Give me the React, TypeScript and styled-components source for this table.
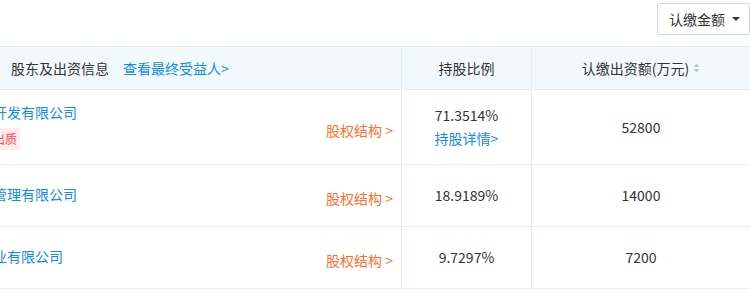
import React from 'react';
import styled, { createGlobalStyle } from 'styled-components';

const GlobalStyle = createGlobalStyle`
  html, body { margin: 0; padding: 0; background: #fff; }
  body {
    font-family: "Noto Sans CJK SC", "Noto Sans", sans-serif;
    font-size: 14px;
    color: #333;
  }
`;

const BLUE = '#128bed';
const ORANGE = '#ff6f2c';
const LINE = '#e4eef6';

const Page = styled.div`
  width: 750px;
  height: 294px;
  overflow: hidden;
  background: #fff;
`;

const TopBar = styled.div`
  height: 46px;
  box-sizing: border-box;
  padding-top: 3px;
  display: flex;
  justify-content: flex-end;
  align-items: flex-start;
`;

const DropButton = styled.button`
  height: 32px;
  width: 93px;
  box-sizing: border-box;
  border: 1px solid #d9d9d9;
  border-radius: 2px;
  background: #fff;
  display: flex;
  align-items: center;
  gap: 7px;
  padding: 0 0 0 11px;
  font-family: inherit;
  font-size: 14px;
  color: #333;
  line-height: 20px;
`;

const Caret = styled.span`
  width: 0;
  height: 0;
  border-left: 4px solid transparent;
  border-right: 4px solid transparent;
  border-top: 4px solid #333;
`;

const Table = styled.div`
  border-top: 1px solid ${LINE};
`;

const Row = styled.div<{ $h: number; $head?: boolean }>`
  display: grid;
  grid-template-columns: 402px 130px 1fr;
  height: ${(p) => p.$h}px;
  border-bottom: 1px solid ${LINE};
  background: ${(p) => (p.$head ? '#f2f9fc' : '#fff')};
`;

const Cell = styled.div<{ $divider?: boolean }>`
  display: flex;
  flex-direction: column;
  align-items: center;
  justify-content: center;
  border-right: ${(p) => (p.$divider ? `1px solid ${LINE}` : 'none')};
  line-height: 23px;
  color: #333;
`;

const HeadLeft = styled.div`
  display: flex;
  align-items: center;
  gap: 14px;
  padding-left: 11px;
  border-right: 1px solid ${LINE};
  line-height: 20px;
`;

const HeadCenter = styled.div<{ $divider?: boolean }>`
  display: flex;
  align-items: center;
  justify-content: center;
  gap: 4px;
  line-height: 20px;
  border-right: ${(p) => (p.$divider ? `1px solid ${LINE}` : 'none')};
`;

const Link = styled.span`
  color: ${BLUE};
`;

const NameCell = styled.div`
  display: flex;
  align-items: center;
  justify-content: space-between;
  padding-right: 8px;
  border-right: 1px solid ${LINE};
  overflow: hidden;
`;

const NameBlock = styled.div`
  display: flex;
  flex-direction: column;
  align-items: flex-start;
  gap: 5px;
  margin-left: -7px;
  padding-bottom: 4px;
`;

const Name = styled.span`
  color: ${BLUE};
  line-height: 22px;
  white-space: nowrap;
`;

const Tag = styled.span`
  font-size: 12px;
  line-height: 22px;
  padding: 0 3px;
  margin-left: -3px;
  border-radius: 2px;
  color: #fd485e;
  background: #ffecef;
`;

const StructLink = styled.span`
  color: ${ORANGE};
  line-height: 22px;
  padding-top: 5px;
  white-space: pre;
`;

const SortIcon = () => (
  <svg width="7" height="10" viewBox="0 0 7 10">
    <path d="M3.5 0.5 L6.5 4 L0.5 4 Z" fill="#c0c4cc" />
    <path d="M3.5 9.5 L6.5 6 L0.5 6 Z" fill="#c0c4cc" />
  </svg>
);

type Holder = {
  name: string;
  tag?: string;
  pct: string;
  detail?: boolean;
  amount: string;
  h: number;
};

const holders: Holder[] = [
  { name: '开发有限公司', tag: '出质', pct: '71.3514%', detail: true, amount: '52800', h: 74 },
  { name: '管理有限公司', pct: '18.9189%', amount: '14000', h: 61 },
  { name: '业有限公司', pct: '9.7297%', amount: '7200', h: 61 },
];

export default function App() {
  return (
    <Page>
      <GlobalStyle />
      <TopBar>
        <DropButton>
          认缴金额
          <Caret />
        </DropButton>
      </TopBar>
      <Table>
        <Row $h={42} $head>
          <HeadLeft>
            <span>股东及出资信息</span>
            <Link>查看最终受益人&gt;</Link>
          </HeadLeft>
          <HeadCenter $divider>持股比例</HeadCenter>
          <HeadCenter>
            认缴出资额(万元)
            <SortIcon />
          </HeadCenter>
        </Row>
        {holders.map((h) => (
          <Row key={h.name} $h={h.h}>
            <NameCell>
              <NameBlock>
                <Name>{h.name}</Name>
                {h.tag && <Tag>{h.tag}</Tag>}
              </NameBlock>
              <StructLink>股权结构 &gt;</StructLink>
            </NameCell>
            <Cell $divider>
              <span>{h.pct}</span>
              {h.detail && <Link>持股详情&gt;</Link>}
            </Cell>
            <Cell>{h.amount}</Cell>
          </Row>
        ))}
      </Table>
    </Page>
  );
}
